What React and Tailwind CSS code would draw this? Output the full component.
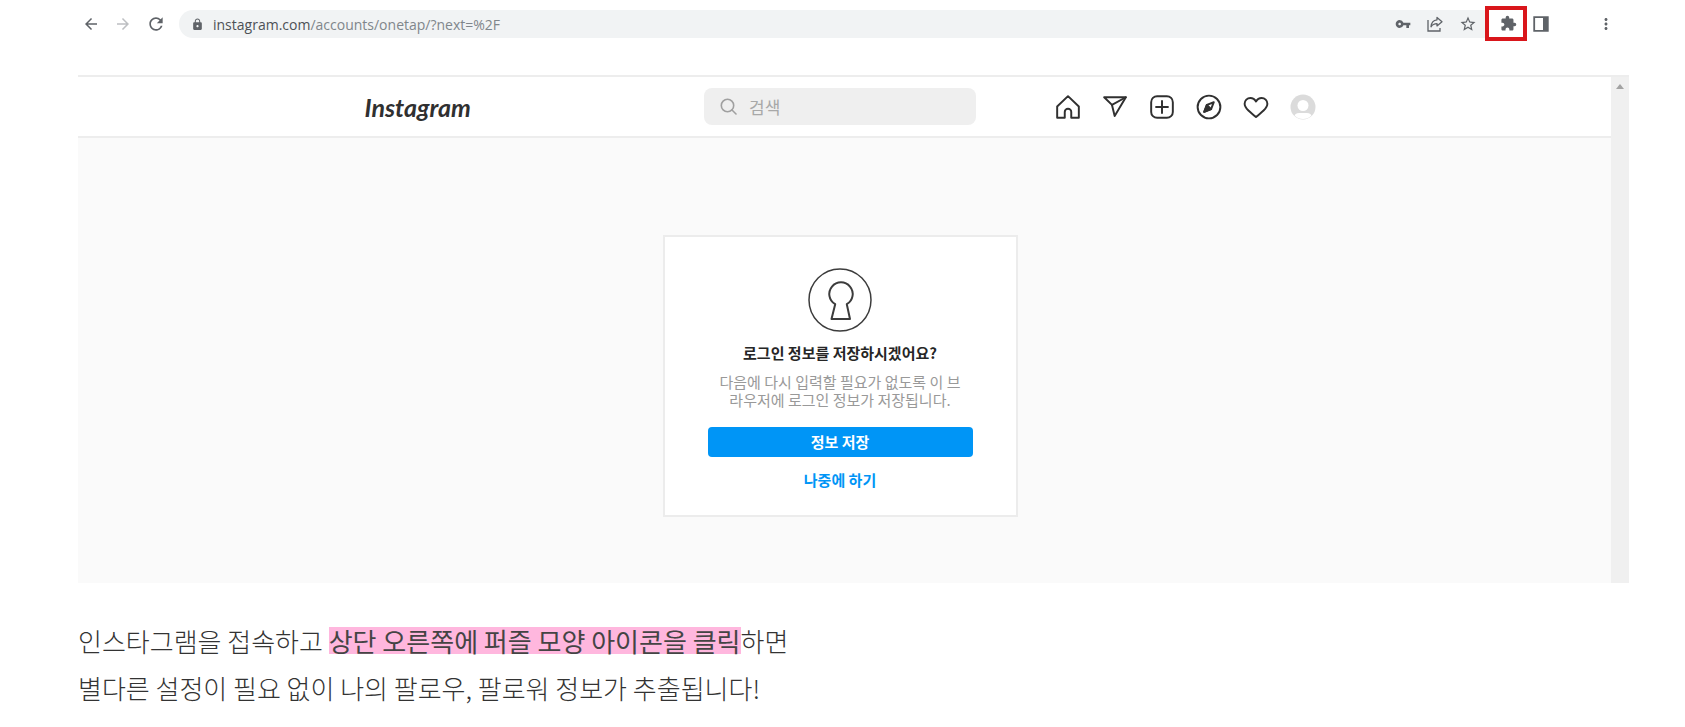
import React from "react";
import {
  MdArrowBack,
  MdArrowForward,
  MdExtension,
  MdLock,
  MdMoreVert,
  MdRefresh,
  MdStarBorder,
  MdVpnKey,
} from "react-icons/md";

function ShareIcon() {
  return (
    <svg width="18" height="18" viewBox="0 0 18 18" fill="none" stroke="currentColor" strokeWidth="1.3">
      <path d="M2 5v11h12v-3" />
      <path d="M11 2.5l5 4.2-5 4.2V8.600c-3 0-4.600.9-6 3.200.3-4 2.300-6.600 6-7z" strokeLinejoin="round" />
    </svg>
  );
}

function SidePanelIcon() {
  return (
    <svg width="16" height="16" viewBox="0 0 16 16">
      <path d="M1.200 1.200h13.600v13.600H1.200z" fill="none" stroke="currentColor" strokeWidth="1.800" />
      <path d="M10 1h5v14h-5z" fill="currentColor" />
    </svg>
  );
}

function NavIcon({ children }) {
  return (
    <svg
      width="26"
      height="26"
      viewBox="0 0 24 24"
      fill="none"
      stroke="currentColor"
      strokeWidth="1.800"
      strokeLinecap="round"
      strokeLinejoin="round"
    >
      {children}
    </svg>
  );
}

const navItems = [
  {
    label: "홈",
    icon: (
      <path d="M9.005 16.545a2.997 2.997 0 0 1 2.997-2.997A2.997 2.997 0 0 1 15 16.545V22h7V11.543L12 2 2 11.543V22h7.005z" />
    ),
  },
  {
    label: "메시지",
    icon: (
      <>
        <path d="M22 3 9.218 10.083" />
        <path d="M11.698 20.334 22 3.001H2l7.218 7.083z" />
      </>
    ),
  },
  {
    label: "새로운 게시물",
    icon: (
      <>
        <rect x="2" y="2" width="20" height="20" rx="5.500" />
        <path d="M6.500 12h11M12 6.500v11" />
      </>
    ),
  },
  {
    label: "탐색",
    icon: (
      <>
        <circle cx="12" cy="12" r="10.500" />
        <path d="M13.941 13.953 7.581 16.424l2.479-6.368 6.360-2.471z" />
        <path d="m10.060 10.056 3.889 3.889-6.368 2.479z" fill="currentColor" />
      </>
    ),
  },
  {
    label: "알림",
    icon: (
      <path d="M12 21.300C9.500 19 7 17.200 5 15.300 3 13.400 1.500 11.700 1.500 9.100 1.500 6 3.900 3.600 6.800 3.600c2.500 0 4.100 1.300 5.200 3.300 1.100-2 2.700-3.300 5.200-3.300 2.900 0 5.300 2.400 5.300 5.500 0 2.600-1.500 4.300-3.500 6.200-2 1.900-4.500 3.700-7 6z" />
    ),
  },
];

function BrowserBar() {
  return (
    <div className="flex h-[75px] items-start pt-[6px] text-[#5f6368]">
      <div className="flex h-9 w-[101px] shrink-0 items-center gap-[14px] pl-1">
        <button aria-label="뒤로"><MdArrowBack size={18} /></button>
        <button aria-label="앞으로" className="text-[#bdbfc2]"><MdArrowForward size={18} /></button>
        <button aria-label="새로고침"><MdRefresh size={20} /></button>
      </div>

      {/* Address bar */}
      <div className="mt-1 flex h-7 min-w-0 flex-1 items-center rounded-l-full bg-[#f1f3f4] pr-2 pl-3">
        <MdLock size={13} />
        <a
          href="#"
          className="ml-[9px] flex-1 truncate font-['Open_Sans','Noto_Sans',sans-serif] text-[14px] text-[#80868b]"
        >
          <span className="text-[#4d5156]">instagram.com</span>/accounts/onetap/?next=%2F
        </a>
        <div className="flex items-center gap-[15px]">
          <button aria-label="비밀번호"><MdVpnKey size={16} /></button>
          <button aria-label="공유"><ShareIcon /></button>
          <button aria-label="북마크"><MdStarBorder size={18} /></button>
        </div>
      </div>

      <button
        aria-label="확장 프로그램"
        className="flex h-[35px] w-[42px] items-center justify-center border-[4px] border-[#d9161b] pl-1"
      >
        <MdExtension size={17} />
      </button>
      <div className="flex h-9 w-[102px] items-center justify-between pr-[14px] pl-[6px]">
        <button aria-label="사이드 패널"><SidePanelIcon /></button>
        <button aria-label="메뉴"><MdMoreVert size={18} /></button>
      </div>
    </div>
  );
}

function SiteHeader() {
  return (
    <header className="border-y-2 border-[#ededed] bg-white pr-[9px]">
      <div className="mx-auto grid h-[59px] max-w-[951px] grid-cols-[1fr_272px_1fr] items-center text-[#303030]">
        <a href="#" className="justify-self-start font-[Lato,sans-serif] text-[25px] leading-8 font-bold italic">
          Instagram
        </a>
        <label className="flex h-[37px] items-center gap-3 rounded-lg bg-[#efefef] px-4 text-[#a0a0a0]">
          <svg width="17" height="17" viewBox="0 0 17 17" fill="none" stroke="currentColor" strokeWidth="1.600">
            <circle cx="7.500" cy="7.500" r="6.200" />
            <path d="m12 12 4 4" strokeLinecap="round" />
          </svg>
          <input
            type="text"
            aria-label="검색"
            placeholder="검색"
            className="min-w-0 flex-1 bg-transparent text-[17px] outline-none placeholder:text-[#a8a8a8]"
          />
        </label>
        <nav className="flex items-center gap-[21px] justify-self-end">
          {navItems.map((item) => (
            <a key={item.label} href="#" aria-label={item.label}>
              <NavIcon>{item.icon}</NavIcon>
            </a>
          ))}
          <a href="#" aria-label="프로필">
            <svg width="26" height="26" viewBox="0 0 26 26">
              <circle cx="13" cy="13" r="12.500" fill="#dbdbdb" />
              <circle cx="13" cy="11.500" r="5.500" fill="#fff" />
              <path d="M4.500 21.500C6 18.800 9 19 13 19s7 -.2 8.500 2.500A12 12 0 0 1 4.500 21.500z" fill="#fff" />
            </svg>
          </a>
        </nav>
      </div>
    </header>
  );
}

function SaveLoginCard() {
  return (
    <section className="mx-auto flex w-[355px] flex-col items-center border-2 border-[#ececec] bg-white px-[43px] pt-[31px] pb-[25px] text-[15px]">
      <svg width="64" height="64" viewBox="0 0 64 64" fill="none" stroke="#3c3c3c">
        <circle cx="32" cy="32" r="31" strokeWidth="1.500" />
        <path
          d="M27.200 36.200a11.700 11.700 0 1 1 11.600 0L42 51H23.500z"
          strokeWidth="2"
          strokeLinejoin="round"
        />
      </svg>
      <h2 className="mt-[11px] leading-5 font-bold text-[#262626]">로그인 정보를 저장하시겠어요?</h2>
      <p className="mt-[10px] text-center leading-[18px] whitespace-nowrap text-[#999999]">
        다음에 다시 입력할 필요가 없도록 이 브
        <br />
        라우저에 로그인 정보가 저장됩니다.
      </p>
      <button className="mt-[18px] h-[30px] w-full rounded bg-[#0095f6] leading-5 font-bold text-white">
        정보 저장
      </button>
      <button className="mt-[13px] leading-5 font-bold text-[#0095f6]">나중에 하기</button>
    </section>
  );
}

export default function App() {
  return (
    <main className="bg-white pr-14 pl-[78px] font-['Noto_Sans_CJK_KR',sans-serif]">
      <BrowserBar />

      <div className="flex">
        <div className="min-w-0 flex-1">
          <SiteHeader />
          <div className="bg-[#fafafa] pt-[97px] pr-[9px] pb-[66px]">
            <SaveLoginCard />
          </div>
        </div>
        {/* Scrollbar */}
        <div className="flex w-[18px] justify-center border-t-2 border-[#ededed] bg-[#f0f0f0] pt-[7px]">
          <svg width="8" height="5" viewBox="0 0 8 5" fill="#a3a3a3">
            <path d="M4 0l4 5H0z" />
          </svg>
        </div>
      </div>

      <p className="pt-[34px] pb-4 text-[26px] leading-[47px] font-light text-[#333333]">
        인스타그램을 접속하고{" "}
        <mark className="inline-block bg-[#ffb7de] leading-[27px] font-normal text-[#444444]">
          상단 오른쪽에 퍼즐 모양 아이콘을 클릭
        </mark>
        하면
        <br />
        별다른 설정이 필요 없이 나의 팔로우, 팔로워 정보가 추출됩니다!
      </p>
    </main>
  );
}
